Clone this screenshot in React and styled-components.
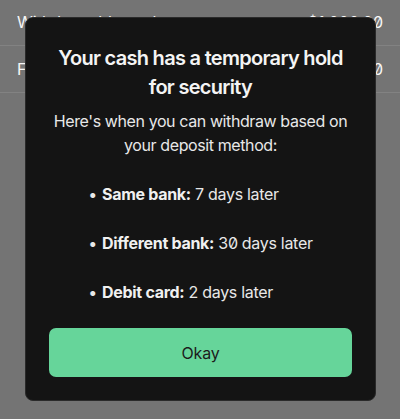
import React from "react";
import styled, { createGlobalStyle } from "styled-components";

const GlobalStyle = createGlobalStyle`
  html, body {
    margin: 0;
    padding: 0;
    background: #141414;
  }
  body {
    font-family: Inter, "Noto Sans", sans-serif;
    font-feature-settings: "zero" 1;
    -webkit-font-smoothing: antialiased;
  }
`;

const Screen = styled.div`
  position: relative;
  width: 400px;
  height: 419px;
  overflow: hidden;
  background: #141414;
`;

const BalanceList = styled.ul`
  list-style: none;
  margin: -1px 0 0;
  padding: 0;
`;

const BalanceRow = styled.li`
  display: flex;
  justify-content: space-between;
  align-items: center;
  padding: 12px 17px;
  font-size: 16px;
  line-height: 22px;
  color: #f2f2f2;
  border-bottom: 1px solid #2c2c2c;
`;

const Overlay = styled.div`
  position: absolute;
  inset: 0;
  background: rgba(255, 255, 255, 0.41);
  display: flex;
  justify-content: center;
  align-items: flex-start;
  padding-top: 17px;
`;

const Dialog = styled.div`
  box-sizing: border-box;
  width: 351px;
  margin-left: 1px;
  background: #141414;
  border: 1px solid #2a2a2a;
  border-radius: 8px;
  padding: 26px 23px 23px;
  display: flex;
  flex-direction: column;
  align-items: center;
  text-align: center;
  color: #eeeeee;
`;

const Title = styled.h2`
  margin: 0;
  font-size: 20px;
  line-height: 29px;
  font-weight: 600;
  color: #f4f4f4;
  letter-spacing: -0.7px;
`;

const Intro = styled.p`
  margin: 7px 0 0;
  font-size: 16px;
  line-height: 24px;
  font-weight: 400;
  color: #e8e8e8;
  letter-spacing: -0.4px;
  white-space: nowrap;
`;

const Methods = styled.ul`
  list-style: none;
  margin: 25px 0 0;
  padding: 0;
  text-align: left;
  display: flex;
  flex-direction: column;
  gap: 25px;
`;

const Method = styled.li`
  font-size: 16px;
  line-height: 24px;
  color: #e8e8e8;
  letter-spacing: -0.3px;
  &::before {
    content: "•";
    margin-right: 5px;
  }
  strong {
    font-weight: 700;
    color: #f0f0f0;
  }
`;

const OkayButton = styled.button`
  box-sizing: border-box;
  width: 100%;
  height: 49px;
  margin-top: 24px;
  border: none;
  border-radius: 7px;
  background: #66d59a;
  color: #1c1c1c;
  font-family: inherit;
  font-size: 16px;
  font-weight: 400;
  letter-spacing: -0.2px;
  cursor: pointer;
`;

const methods = [
  { label: "Same bank:", wait: "7 days later" },
  { label: "Different bank:", wait: "30 days later" },
  { label: "Debit card:", wait: "2 days later" },
];

export default function App() {
  return (
    <>
      <GlobalStyle />
      <Screen>
        <BalanceList>
          <BalanceRow>
            <span>Withdrawable cash</span>
            <span>$1,000.00</span>
          </BalanceRow>
          <BalanceRow>
            <span>Funds on hold</span>
            <span>$500.00</span>
          </BalanceRow>
        </BalanceList>
        <Overlay>
          <Dialog role="dialog">
            <Title>
              Your cash has a temporary hold
              <br />
              for security
            </Title>
            <Intro>
              Here's when you can withdraw based on
              <br />
              your deposit method:
            </Intro>
            <Methods>
              {methods.map((m) => (
                <Method key={m.label}>
                  <strong>{m.label}</strong> {m.wait}
                </Method>
              ))}
            </Methods>
            <OkayButton>Okay</OkayButton>
          </Dialog>
        </Overlay>
      </Screen>
    </>
  );
}
